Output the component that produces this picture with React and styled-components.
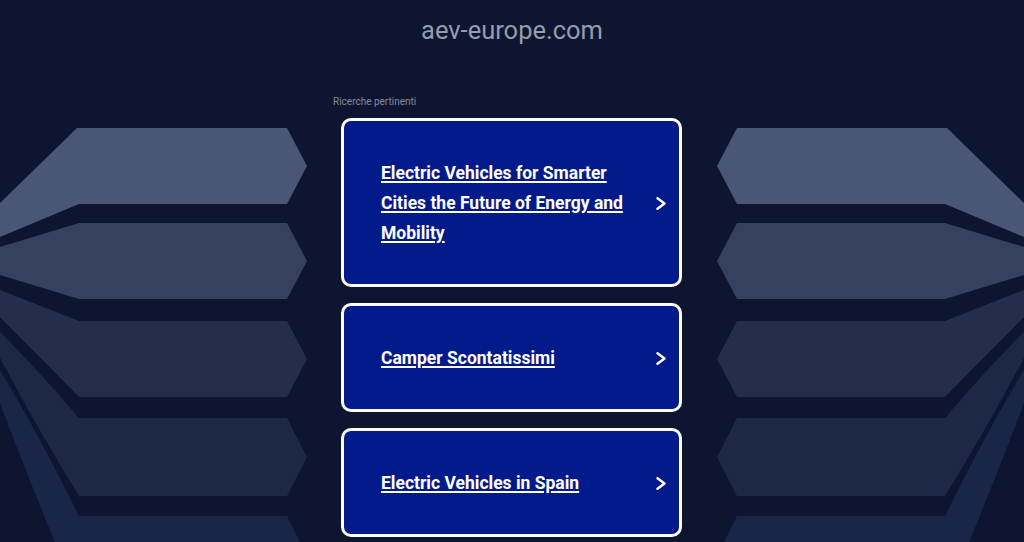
import React from "react";
import styled, { createGlobalStyle } from "styled-components";

const GlobalStyle = createGlobalStyle`
  html, body {
    margin: 0;
    padding: 0;
    background: #0d1530;
    overflow: hidden;
  }
  body {
    font-family: Roboto, "Liberation Sans", Arial, sans-serif;
  }
`;

const Page = styled.div`
  display: flex;
  width: 1024px;
  height: 542px;
  overflow: hidden;
  background: #0d1530;
`;

const Side = styled.div`
  flex: 1;
  display: flex;
  justify-content: ${(p) => (p.$right ? "flex-end" : "flex-start")};
  svg {
    display: block;
    transform: ${(p) => (p.$right ? "scaleX(-1)" : "none")};
  }
`;

const Main = styled.main`
  flex: 0 0 358px;
  display: flex;
  flex-direction: column;
`;

const Domain = styled.h1`
  margin: 16px 0 0;
  font-size: 25.5px;
  line-height: 28px;
  font-weight: 400;
  color: #959cab;
  text-align: center;
`;

const Label = styled.div`
  margin-top: 52px;
  font-size: 10px;
  line-height: 12px;
  color: #858b9b;
`;

const List = styled.div`
  display: flex;
  flex-direction: column;
  gap: 16px;
  margin-top: 10px;
  padding: 0 9px 0 8px;
`;

const Card = styled.a`
  display: flex;
  align-items: center;
  justify-content: space-between;
  gap: 20px;
  padding: 37px 12px 36px 37px;
  border: 3px solid #ffffff;
  border-radius: 10px;
  background: #031a8a;
  text-decoration: none;
  cursor: pointer;
`;

const CardText = styled.span`
  flex: 1;
  color: #ffffff;
  font-size: 17.5px;
  line-height: 30px;
  font-weight: 700;
  text-decoration: underline;
  text-decoration-thickness: 1.5px;
  text-underline-offset: 2px;
`;

const Chevron = () => (
  <svg width="11" height="13" viewBox="0 0 11 13" style={{ flex: "none" }}>
    <polyline
      points="1.5,1.2 8.5,6.5 1.5,11.8"
      fill="none"
      stroke="#ffffff"
      strokeWidth="2.4"
      strokeLinecap="round"
      strokeLinejoin="round"
    />
  </svg>
);

const shapes = [
  { fill: "#4a5676", d: "M0 203 L77 128 L287 128 L307 166 L287 204 L79 204 L0 237 Z" },
  { fill: "#36415f", d: "M0 247 L79 223 L287 223 L307 261 L287 299 L79 299 L0 275 Z" },
  { fill: "#242e4c", d: "M0 290 L79 321 L287 321 L307 359 L287 397 L79 397 L0 317 Z" },
  { fill: "#1d2746", d: "M0 332 Q40 372 79 418 L287 418 L307 457 L287 496 L79 496 Q38 430 0 358 Z" },
  { fill: "#1a2648", d: "M0 370 Q42 440 79 516 L287 516 L300 542 L55 542 Q25 470 0 403 Z" },
];

const Decor = () => (
  <svg width="310" height="542" viewBox="0 0 310 542">
    {shapes.map((s, i) => (
      <path key={i} d={s.d} fill={s.fill} />
    ))}
  </svg>
);

const items = [
  "Electric Vehicles for Smarter Cities the Future of Energy and Mobility",
  "Camper Scontatissimi",
  "Electric Vehicles in Spain",
];

export default function App() {
  return (
    <>
      <GlobalStyle />
      <Page>
        <Side>
          <Decor />
        </Side>
        <Main>
          <Domain>aev-europe.com</Domain>
          <Label>Ricerche pertinenti</Label>
          <List>
            {items.map((t) => (
              <Card key={t}>
                <CardText>{t}</CardText>
                <Chevron />
              </Card>
            ))}
          </List>
        </Main>
        <Side $right>
          <Decor />
        </Side>
      </Page>
    </>
  );
}
